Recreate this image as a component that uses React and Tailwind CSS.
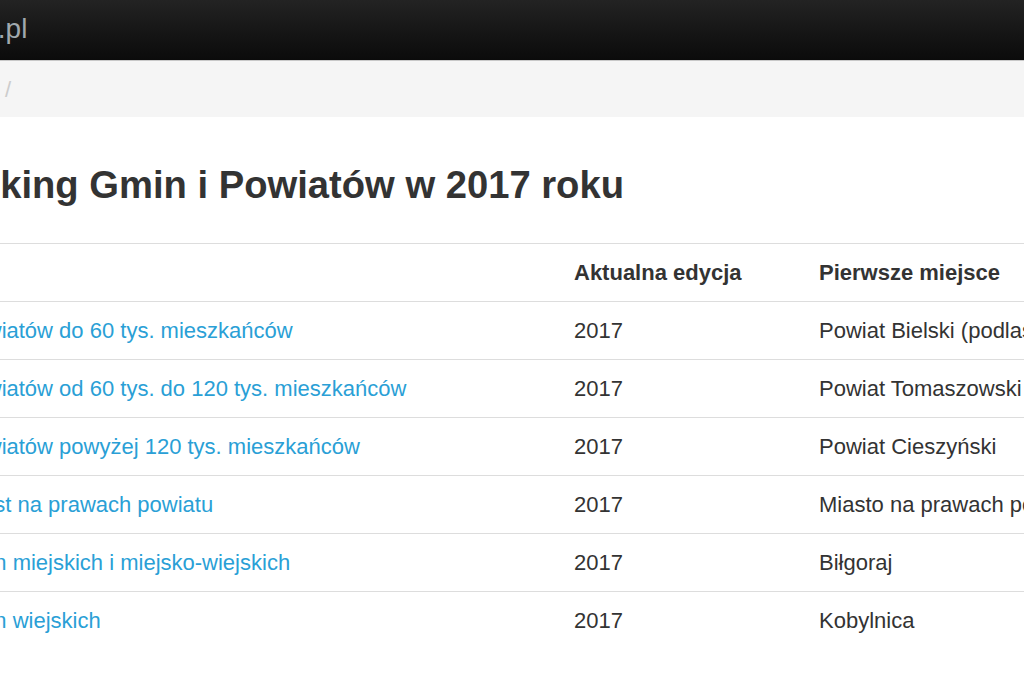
import React from 'react';

const rows = [
  { name: 'Ranking Powiatów do 60 tys. mieszkańców', year: '2017', winner: 'Powiat Bielski (podlaskie)' },
  { name: 'Ranking Powiatów od 60 tys. do 120 tys. mieszkańców', year: '2017', winner: 'Powiat Tomaszowski (lubelskie)' },
  { name: 'Ranking Powiatów powyżej 120 tys. mieszkańców', year: '2017', winner: 'Powiat Cieszyński' },
  { name: 'Ranking Miast na prawach powiatu', year: '2017', winner: 'Miasto na prawach powiatu Rzeszów' },
  { name: 'Ranking gmin miejskich i miejsko-wiejskich', year: '2017', winner: 'Biłgoraj' },
  { name: 'Ranking gmin wiejskich', year: '2017', winner: 'Kobylnica' },
];

const App = () => {
  return (
    <div className="w-[1024px] h-[682px] overflow-hidden bg-white text-[#333] font-['Liberation_Sans',Arial,sans-serif]">
      {/* Navbar */}
      <nav className="h-[61px] bg-gradient-to-b from-[#232323] to-[#0b0b0b] border-b border-[#c8c8c8] flex items-center">
        <a className="ml-[-94px] text-[28px] text-[#a0a8ae] leading-none pb-[2px] whitespace-nowrap">ranking.pl</a>
      </nav>

      {/* Breadcrumb */}
      <div className="h-[56px] bg-[#f5f5f5] flex items-center">
        <ol className="flex items-center ml-[-60px] text-[22px] whitespace-nowrap">
          <li className="text-[#2a9fd6] w-[60px] overflow-hidden">Start</li>
          <li className="text-[#ccc] pl-[5px]">/</li>
        </ol>
      </div>

      {/* Content */}
      <main className="ml-[-136px] w-[1600px]">
        <h1 className="ml-[64px] mt-[47px] text-[38.2px] leading-[42px] font-bold whitespace-nowrap">
          Ranking Gmin i Powiatów w 2017 roku
        </h1>

        <div className="mt-[37px] text-[22px] whitespace-nowrap">
          <div className="flex h-[58px] items-center border-t border-[#ddd] font-bold">
            <div className="w-[702px] shrink-0 px-[8px]">Nazwa</div>
            <div className="w-[245px] shrink-0 px-[8px]">Aktualna edycja</div>
            <div className="px-[8px]">Pierwsze miejsce</div>
          </div>
          {rows.map((r) => (
            <div key={r.name} className="flex h-[58px] items-center border-t border-[#ddd]">
              <div className="w-[702px] shrink-0 px-[8px]">
                <a className="text-[#2a9fd6]">{r.name}</a>
              </div>
              <div className="w-[245px] shrink-0 px-[8px]">{r.year}</div>
              <div className="px-[8px]">{r.winner}</div>
            </div>
          ))}
        </div>
      </main>
    </div>
  );
};

export default App;
